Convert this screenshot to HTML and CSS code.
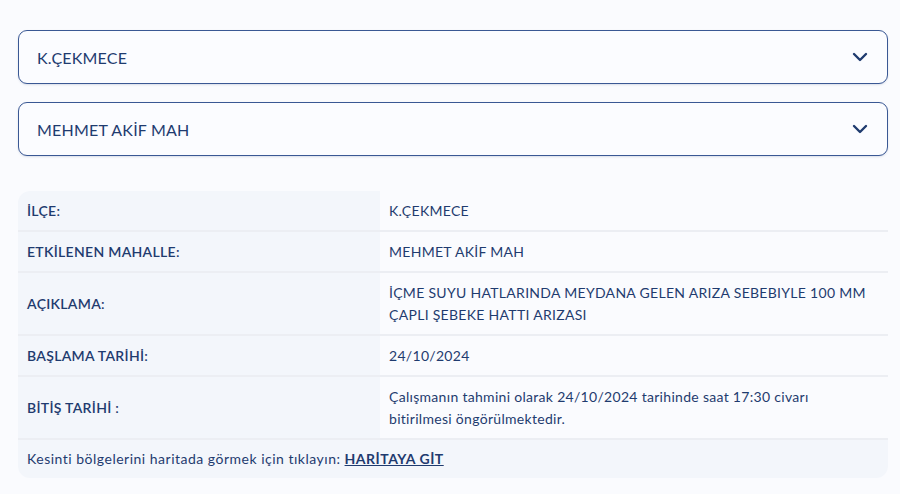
FILE: index.html
```html
<!DOCTYPE html>
<html lang="tr">
<head>
    <meta charset="UTF-8">
    <meta name="viewport" content="width=device-width, initial-scale=1.0">
    <title>Su Kesintisi</title>
    <link rel="stylesheet" href="styles.css">
</head>
<body>
    <div class="page">
        <div class="select-box">
            <span>K.ÇEKMECE</span>
            <svg class="chevron" width="16" height="10" viewBox="0 0 16 10"><path d="M2 2l6 6 6-6" fill="none" stroke="#1f3b6f" stroke-width="2.4" stroke-linecap="round" stroke-linejoin="round"/></svg>
        </div>
        <div class="select-box">
            <span>MEHMET AKİF MAH</span>
            <svg class="chevron" width="16" height="10" viewBox="0 0 16 10"><path d="M2 2l6 6 6-6" fill="none" stroke="#1f3b6f" stroke-width="2.4" stroke-linecap="round" stroke-linejoin="round"/></svg>
        </div>

        <table class="info">
            <tr>
                <th>İLÇE:</th>
                <td>K.ÇEKMECE</td>
            </tr>
            <tr>
                <th>ETKİLENEN MAHALLE:</th>
                <td>MEHMET AKİF MAH</td>
            </tr>
            <tr>
                <th>AÇIKLAMA:</th>
                <td>İÇME SUYU HATLARINDA MEYDANA GELEN ARIZA SEBEBIYLE 100 MM ÇAPLI ŞEBEKE HATTI ARIZASI</td>
            </tr>
            <tr>
                <th>BAŞLAMA TARİHİ:</th>
                <td>24/10/2024</td>
            </tr>
            <tr>
                <th>BİTİŞ TARİHİ :</th>
                <td>Çalışmanın tahmini olarak 24/10/2024 tarihinde saat 17:30 civarı bitirilmesi öngörülmektedir.</td>
            </tr>
            <tr class="map-row">
                <td colspan="2">Kesinti bölgelerini haritada görmek için tıklayın: <a href="#">HARİTAYA GİT</a></td>
            </tr>
        </table>
    </div>
</body>
</html>
```

FILE: styles.css
```css
body {
    margin: 0;
    background: #fafbfe;
    font-family: Lato, "Open Sans", Arial, sans-serif;
    color: #1f3b6f;
}
.page {
    padding: 30px 12px 0 18px;
}
.select-box {
    height: 54px;
    box-sizing: border-box;
    border: 1.5px solid #3a5894;
    border-radius: 9px;
    background: #fbfcff;
    display: flex;
    align-items: center;
    justify-content: space-between;
    padding: 0 19px 0 18px;
    margin-bottom: 18px;
    font-size: 16px;
    letter-spacing: 0.2px;
    box-shadow: 0 1px 2px rgba(31,59,111,0.15);
}
.chevron {
    display: block;
}
.info {
    width: 100%;
    margin-top: 35px;
    border-collapse: separate;
    border-spacing: 0;
    font-size: 14px;
    line-height: 22px;
    letter-spacing: 0.3px;
}
.info th,
.info td {
    padding: 9px 9px 8px 9px;
    text-align: left;
    vertical-align: middle;
    border-bottom: 2px solid #eceef3;
}
.info th {
    width: 344px;
    background: #f3f6fb;
    font-weight: 600;
}
.info td {
    font-weight: 400;
    padding-right: 20px;
}
.info tr:first-child th {
    border-top-left-radius: 12px;
}
.map-row td {
    background: #f3f6fb;
    border-bottom: none;
    padding-top: 8px;
    padding-bottom: 8px;
    border-radius: 0 0 12px 12px;
    letter-spacing: 0.5px;
}
.map-row a {
    color: #1f3b6f;
    font-weight: 700;
    text-decoration: underline;
}
```
